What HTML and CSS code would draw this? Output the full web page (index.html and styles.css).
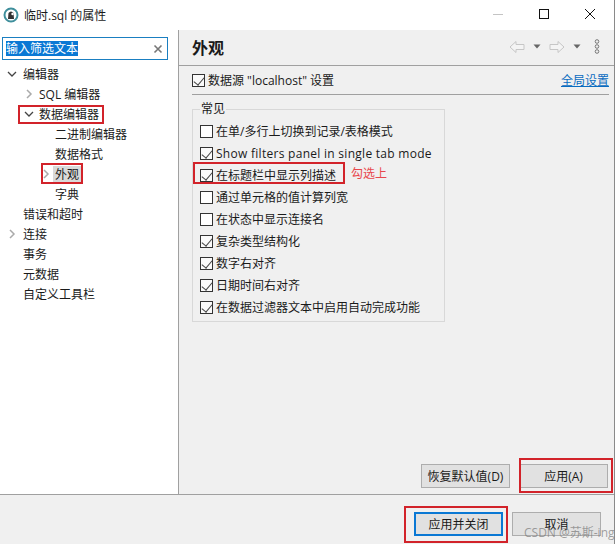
FILE: index.html
```html
<!DOCTYPE html>
<html lang="en">
<head>
  <meta charset="UTF-8">
  <meta name="viewport" content="width=device-width, initial-scale=1.0">
  <title>临时.sql 的属性</title>
  <link rel="stylesheet" href="styles.css">
</head>
<body>
  <div class="dialog">
    <div class="titlebar">
      <svg class="app-icon" width="16" height="16" viewBox="0 0 16 16">
        <circle cx="8" cy="8" r="6.5" fill="#fff" stroke="#3f8f9c" stroke-width="2"/>
        <path d="M5 12 L5.5 6 Q8 3 10.5 6 L11 12 Z" fill="#333"/>
        <circle cx="9.5" cy="7" r="1.2" fill="#fff"/>
      </svg>
      <span class="title-text">临时.sql 的属性</span>
      <div class="win-buttons">
        <svg width="46" height="30" viewBox="0 0 46 30"><path d="M18 14.5 H28" stroke="#c4c4c4" fill="none"/></svg>
        <svg width="46" height="30" viewBox="0 0 46 30"><rect x="18.5" y="9.5" width="9" height="9" fill="none" stroke="#111"/></svg>
        <svg width="46" height="30" viewBox="0 0 46 30"><path d="M18 9 L28 19 M28 9 L18 19" stroke="#111" fill="none"/></svg>
      </div>
    </div>

    <div class="main">
      <div class="sidebar">
        <div class="search">
          <span class="search-text">输入筛选文本</span>
          <svg width="10" height="10" viewBox="0 0 10 10"><path d="M1.5 1.5 L8.5 8.5 M8.5 1.5 L1.5 8.5" stroke="#777" stroke-width="1.6" fill="none"/></svg>
        </div>
        <ul class="tree">
          <li class="node lvl0"><svg class="arrow" width="10" height="10" viewBox="0 0 10 10"><path d="M1 3 L5 7 L9 3" stroke="#444" stroke-width="1.3" fill="none"/></svg>编辑器</li>
          <li class="node lvl1"><svg class="arrow" width="10" height="10" viewBox="0 0 10 10"><path d="M3 1 L7 5 L3 9" stroke="#aaa" stroke-width="1.5" fill="none"/></svg>SQL 编辑器</li>
          <li class="node lvl1"><svg class="arrow" width="10" height="10" viewBox="0 0 10 10"><path d="M1 3 L5 7 L9 3" stroke="#444" stroke-width="1.3" fill="none"/></svg>数据编辑器</li>
          <li class="node lvl2">二进制编辑器</li>
          <li class="node lvl2">数据格式</li>
          <li class="node lvl2"><svg class="arrow arrow-sel" width="10" height="10" viewBox="0 0 10 10"><path d="M3 1 L7 5 L3 9" stroke="#aaa" stroke-width="1.5" fill="none"/></svg><span class="selected">外观</span></li>
          <li class="node lvl2">字典</li>
          <li class="node lvl0">错误和超时</li>
          <li class="node lvl0"><svg class="arrow" width="10" height="10" viewBox="0 0 10 10"><path d="M3 1 L7 5 L3 9" stroke="#aaa" stroke-width="1.5" fill="none"/></svg>连接</li>
          <li class="node lvl0">事务</li>
          <li class="node lvl0">元数据</li>
          <li class="node lvl0">自定义工具栏</li>
        </ul>
      </div>

      <div class="content">
        <div class="content-head">
          <h2>外观</h2>
          <div class="nav-icons">
            <svg width="16" height="14" viewBox="0 0 16 14"><path d="M1 7 L7 1.5 V4.5 H15 V9.5 H7 V12.5 Z" fill="#f4f4f4" stroke="#c6c6c6"/></svg>
            <svg class="caret" width="8" height="5" viewBox="0 0 8 5"><path d="M0.5 0.5 H7.5 L4 4.5 Z" fill="#666"/></svg>
            <svg width="16" height="14" viewBox="0 0 16 14"><path d="M15 7 L9 1.5 V4.5 H1 V9.5 H9 V12.5 Z" fill="#f4f4f4" stroke="#c6c6c6"/></svg>
            <svg class="caret" width="8" height="5" viewBox="0 0 8 5"><path d="M0.5 0.5 H7.5 L4 4.5 Z" fill="#666"/></svg>
            <svg class="dots" width="6" height="15" viewBox="0 0 6 15"><circle cx="3" cy="2.5" r="1.8" fill="#eee" stroke="#777"/><circle cx="3" cy="7.5" r="1.8" fill="#eee" stroke="#777"/><circle cx="3" cy="12.5" r="1.8" fill="#eee" stroke="#777"/></svg>
          </div>
        </div>

        <div class="content-body">
          <div class="source-row">
            <label class="check-row"><span class="box checked"></span>数据源 "localhost" 设置</label>
            <a class="link">全局设置</a>
          </div>

          <fieldset class="group">
            <legend>常见</legend>
            <label class="check-row"><span class="box"></span>在单/多行上切换到记录/表格模式</label>
            <label class="check-row latin"><span class="box checked"></span>Show filters panel in single tab mode</label>
            <label class="check-row"><span class="box checked"></span>在标题栏中显示列描述</label>
            <label class="check-row"><span class="box"></span>通过单元格的值计算列宽</label>
            <label class="check-row"><span class="box"></span>在状态中显示连接名</label>
            <label class="check-row"><span class="box checked"></span>复杂类型结构化</label>
            <label class="check-row"><span class="box checked"></span>数字右对齐</label>
            <label class="check-row"><span class="box checked"></span>日期时间右对齐</label>
            <label class="check-row"><span class="box checked"></span>在数据过滤器文本中启用自动完成功能</label>
          </fieldset>

          <div class="page-buttons">
            <button class="btn">恢复默认值(D)</button>
            <button class="btn">应用(A)</button>
          </div>
        </div>
      </div>
    </div>

    <div class="footer">
      <button class="btn primary">应用并关闭</button>
      <button class="btn">取消</button>
    </div>
  </div>

  <!-- annotations drawn on top of the screenshot -->
  <div class="mark mark-tree1"></div>
  <div class="mark mark-tree2"></div>
  <div class="mark mark-option"></div>
  <div class="mark mark-apply"></div>
  <div class="mark mark-close"></div>
  <span class="mark-note">勾选上</span>
  <span class="watermark">CSDN @苏斯-ing</span>
</body>
</html>
```

FILE: styles.css
```css
* {
  box-sizing: border-box;
}

body {
  margin: 0;
  width: 615px;
  height: 544px;
  position: relative;
  overflow: hidden;
  font-family: "Open Sans", "Noto Sans CJK SC", sans-serif;
  font-size: 12px;
  color: #1a1a1a;
  background-color: #f0f0f0;
}

.dialog {
  height: 544px;
  display: flex;
  flex-direction: column;
  border-right: 1px solid #8a8a8a;
}

/* title bar */
.titlebar {
  height: 30px;
  flex: none;
  display: flex;
  align-items: center;
  padding-left: 3px;
  background-color: #fff;
}

.app-icon {
  margin-right: 5px;
}

.title-text {
  flex: 1;
}

.win-buttons {
  display: flex;
  height: 30px;
  margin-right: 1px;
}

/* main area */
.main {
  flex: 1;
  display: flex;
  min-height: 0;
  border-bottom: 1px solid #a0a0a0;
}

.sidebar {
  width: 179px;
  flex: none;
  padding: 7px 0 0 2px;
  background-color: #fff;
  border-right: 1px solid #a0a0a0;
}

.search {
  width: 166px;
  height: 23px;
  display: flex;
  align-items: center;
  justify-content: space-between;
  padding: 0 4px 0 3px;
  border: 1px solid #1a7fc1;
  background-color: #fff;
}

.search-text {
  background-color: #0a78d4;
  color: #fff;
  line-height: 15px;
}

.tree {
  list-style: none;
  margin: 4px 0 0;
  padding: 0;
}

.node {
  height: 20px;
  display: flex;
  align-items: center;
  position: relative;
  white-space: nowrap;
}

.lvl0 {
  padding-left: 21px;
}

.lvl1 {
  padding-left: 37px;
}

.lvl2 {
  padding-left: 53px;
}

.arrow {
  position: absolute;
  top: 5px;
  left: 5px;
}

.lvl1 .arrow {
  left: 22px;
}

.arrow-sel {
  left: 39px;
}

.selected {
  background-color: #d9d9d9;
  padding: 0 2px;
  margin-left: -2px;
  line-height: 17px;
}

/* right panel */
.content {
  flex: 1;
  display: flex;
  flex-direction: column;
  min-width: 0;
}

.content-head {
  height: 36px;
  flex: none;
  display: flex;
  align-items: center;
  justify-content: space-between;
  padding: 0 14px 2px 13px;
  border-bottom: 1px solid #a0a0a0;
}

.content-head h2 {
  margin: 0;
  font-size: 16px;
  font-weight: 700;
}

.nav-icons {
  display: flex;
  align-items: center;
  gap: 8px;
}

.dots {
  margin-left: 5px;
}

.content-body {
  flex: 1;
  display: flex;
  flex-direction: column;
  padding: 0 5px 6px 13px;
}

.source-row {
  height: 29px;
  flex: none;
  display: flex;
  align-items: center;
  justify-content: space-between;
  border-bottom: 1px solid #a0a0a0;
}

.link {
  color: #0a6cc0;
  text-decoration: underline;
}

.check-row {
  display: flex;
  align-items: center;
  gap: 3px;
  height: 22px;
  white-space: nowrap;
}

.latin {
  letter-spacing: 0.28px;
}

.box {
  width: 13px;
  height: 13px;
  flex: none;
  border: 1px solid #333;
  background-color: #fff;
  position: relative;
}

.box.checked {
  background-color: #fafafa;
}

.box.checked::after {
  content: "";
  position: absolute;
  left: 3px;
  top: 0;
  width: 5px;
  height: 9px;
  border: solid #444;
  border-width: 0 1px 1px 0;
  transform: rotate(40deg);
}

.group {
  width: 253px;
  margin: 7px 0 0;
  padding: 4px 8px 3px 7px;
  border: 1px solid #d8d8d8;
}

.group legend {
  padding: 0 1px;
  margin-left: 0;
  line-height: 14px;
}

.page-buttons {
  margin-top: auto;
  display: flex;
  justify-content: flex-end;
  gap: 9px;
  margin-right: 1px;
}

.btn {
  width: 89px;
  height: 24px;
  padding: 0;
  font-family: inherit;
  font-size: 12px;
  color: #1a1a1a;
  background-color: #e1e1e1;
  border: 1px solid #adadad;
}

.footer {
  height: 49px;
  flex: none;
  display: flex;
  justify-content: flex-end;
  align-items: flex-start;
  gap: 9px;
  padding: 17px 13px 0 0;
}

.primary {
  border: 2px solid #0a78d4;
}

/* red annotation boxes */
.mark {
  position: absolute;
  border: 2px solid #d2232a;
}

.mark-tree1 {
  left: 18px;
  top: 105px;
  width: 86px;
  height: 19px;
}

.mark-tree2 {
  left: 41px;
  top: 163px;
  width: 42px;
  height: 21px;
}

.mark-option {
  left: 193px;
  top: 162px;
  width: 152px;
  height: 22px;
}

.mark-apply {
  left: 519px;
  top: 458px;
  width: 94px;
  height: 35px;
}

.mark-close {
  left: 404px;
  top: 506px;
  width: 104px;
  height: 37px;
}

.mark-note {
  position: absolute;
  left: 351px;
  top: 164px;
  color: #e8474c;
}

.watermark {
  position: absolute;
  left: 524px;
  top: 523px;
  color: rgba(120, 120, 120, 0.7);
  white-space: nowrap;
}
```
